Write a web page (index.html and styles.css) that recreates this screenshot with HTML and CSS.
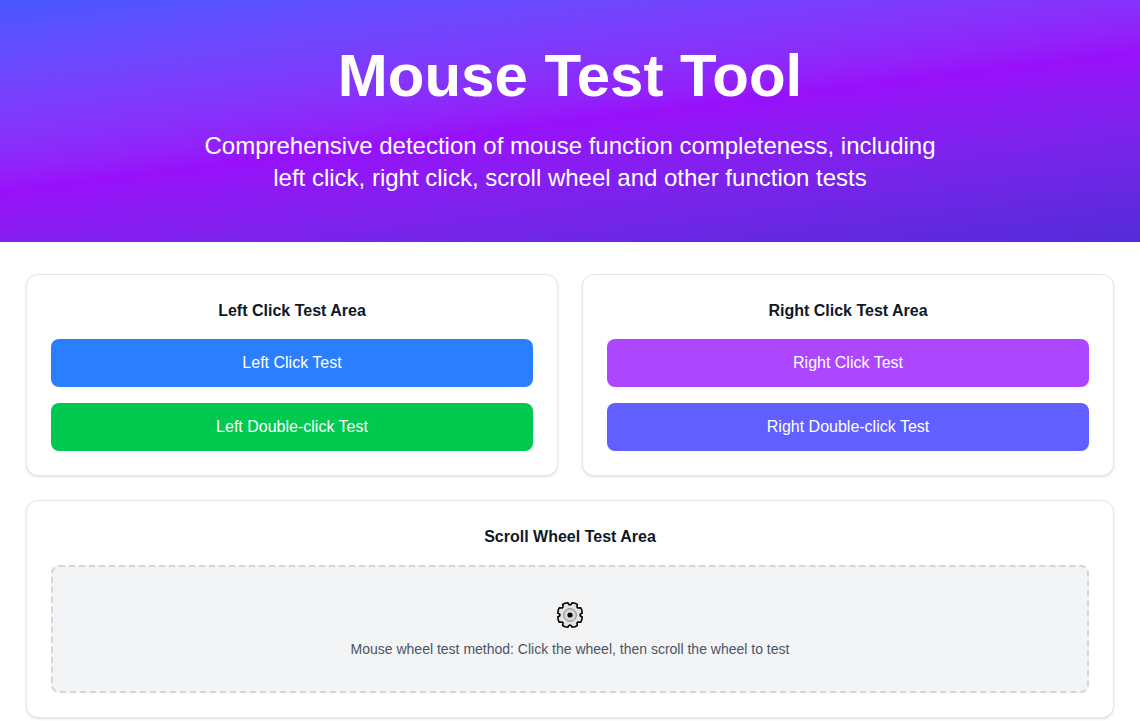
FILE: index.html
```html
<!DOCTYPE html>
<html lang="en">
<head>
<meta charset="UTF-8" />
<meta name="viewport" content="width=device-width, initial-scale=1" />
<title>Mouse Test Tool</title>
<link rel="stylesheet" href="styles.css">
</head>
<body>
  <header class="hero">
    <h1>Mouse Test Tool</h1>
    <p>Comprehensive detection of mouse function completeness, including left click, right click, scroll wheel and other function tests</p>
  </header>

  <main class="test-grid">
    <section class="card">
      <h2>Left Click Test Area</h2>
      <div class="buttons">
        <button type="button" class="btn btn-blue">Left Click Test</button>
        <button type="button" class="btn btn-green">Left Double-click Test</button>
      </div>
    </section>

    <section class="card">
      <h2>Right Click Test Area</h2>
      <div class="buttons">
        <button type="button" class="btn btn-purple">Right Click Test</button>
        <button type="button" class="btn btn-indigo">Right Double-click Test</button>
      </div>
    </section>

    <section class="card card-wide">
      <h2>Scroll Wheel Test Area</h2>
      <div class="wheel-area">
        <!-- Gear icon -->
        <svg class="gear-icon" viewBox="-16 -16 32 32" aria-hidden="true">
          <path d="M0.8 -10.2 L2 -12.2 L5 -11.8 L7.3 -10.6 L7 -7.8 L7.8 -7 L10.6 -7.3 L11.8 -5 L12.2 -2 L10.2 -0.8 L10.2 0.8 L12.2 2 L11.8 5 L10.6 7.3 L7.8 7 L7 7.8 L7.3 10.6 L5 11.8 L2 12.2 L0.8 10.2 L-0.8 10.2 L-2 12.2 L-5 11.8 L-7.3 10.6 L-7 7.8 L-7.8 7 L-10.6 7.3 L-11.8 5 L-12.2 2 L-10.2 0.8 L-10.2 -0.8 L-12.2 -2 L-11.8 -5 L-10.6 -7.3 L-7.8 -7 L-7 -7.8 L-7.3 -10.6 L-5 -11.8 L-2 -12.2 L-0.8 -10.2 Z" fill="#e4e4e4" stroke="#000" stroke-width="1.6" stroke-linejoin="round"/>
          <circle r="6.4" fill="#cfcfcf" stroke="#777" stroke-width="0.8"/>
          <circle r="4.2" fill="#dedede"/>
          <circle r="2.6" fill="#000"/>
        </svg>
        <p>Mouse wheel test method: Click the wheel, then scroll the wheel to test</p>
      </div>
    </section>
  </main>
</body>
</html>
```
FILE: styles.css
```css
* {
  box-sizing: border-box;
}

body {
  margin: 0;
  font-family: "Liberation Sans", Arial, sans-serif;
  font-size: 16px;
  line-height: 24px;
  color: #101828;
  background: #fff;
}

h1, h2, p {
  margin: 0;
}

.hero {
  padding: 48px 24px;
  text-align: center;
  color: #fff;
  background: linear-gradient(173deg in oklab, #4657ff, #9810fa 50%, #532bd9);
}

.hero h1 {
  margin-bottom: 26px;
  font-size: 60px;
  line-height: 56px;
  font-weight: 700;
}

.hero p {
  max-width: 768px;
  margin: 0 auto;
  font-size: 24px;
  line-height: 32px;
}

.test-grid {
  display: grid;
  grid-template-columns: 1fr 1fr;
  gap: 24px;
  padding: 32px 26px;
}

.card {
  padding: 24px;
  text-align: center;
  background: #fff;
  border: 1px solid #e5e7eb;
  border-radius: 12px;
  box-shadow: 0 1px 3px rgba(0, 0, 0, 0.1), 0 1px 2px -1px rgba(0, 0, 0, 0.1);
}

.card-wide {
  grid-column: 1 / -1;
}

.card h2 {
  margin-bottom: 16px;
  font-size: 16px;
  line-height: 24px;
  font-weight: 700;
}

.buttons {
  display: flex;
  flex-direction: column;
  gap: 16px;
}

.btn {
  padding: 12px 24px;
  border: none;
  border-radius: 8px;
  font-family: inherit;
  font-size: 16px;
  line-height: 24px;
  color: #fff;
  cursor: pointer;
}

.btn-blue {
  background: #2b7fff;
}

.btn-green {
  background: #00c950;
}

.btn-purple {
  background: #ad46ff;
}

.btn-indigo {
  background: #615fff;
}

.wheel-area {
  display: flex;
  flex-direction: column;
  align-items: center;
  justify-content: center;
  gap: 8px;
  min-height: 128px;
  background: #f3f4f6;
  border: 2px dashed #d1d5dc;
  border-radius: 8px;
}

.gear-icon {
  width: 32px;
  height: 32px;
}

.wheel-area p {
  font-size: 14px;
  line-height: 20px;
  color: #4a5565;
}
```
